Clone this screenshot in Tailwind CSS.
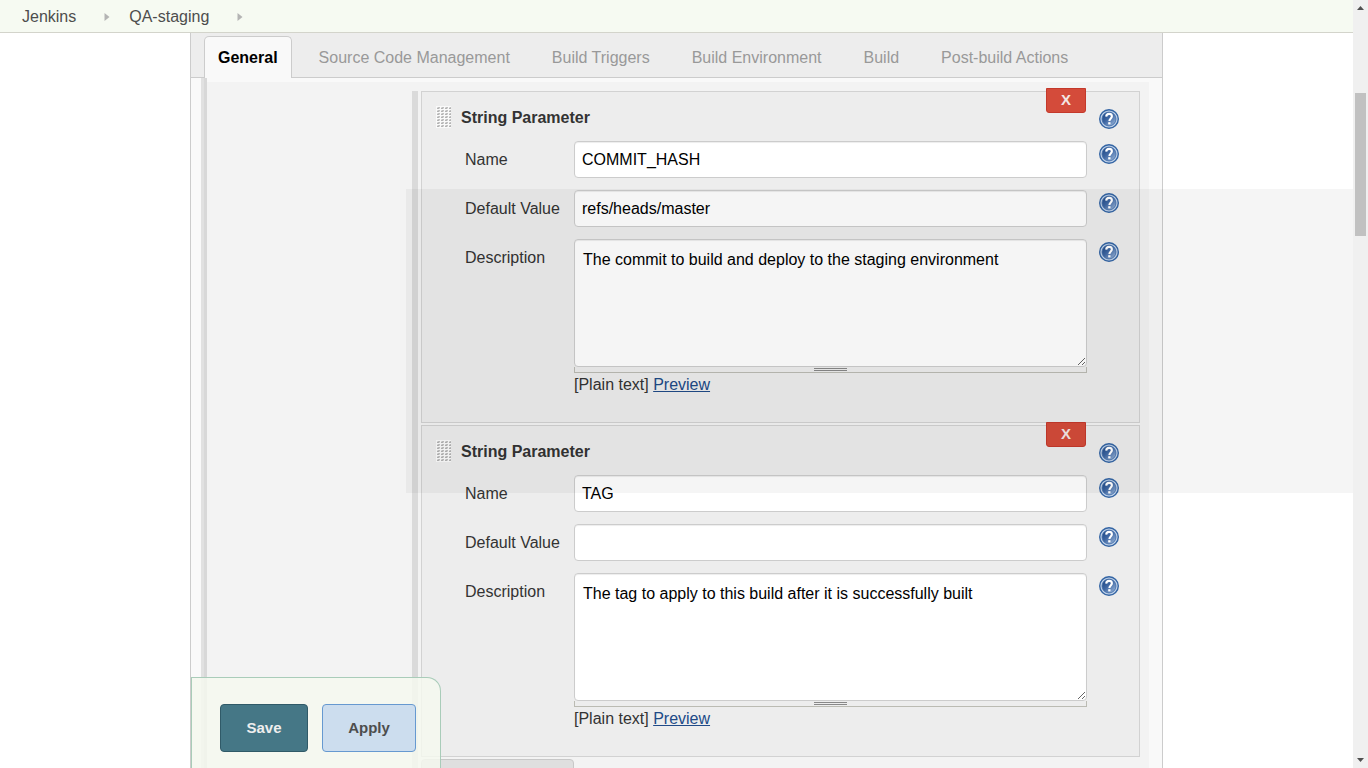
<!DOCTYPE html>
<html lang="en">
<head>
<meta charset="utf-8">
<title>QA-staging Config [Jenkins]</title>
<script src="https://cdn.jsdelivr.net/npm/@tailwindcss/browser@4"></script>
</head>
<body class="relative flex h-screen overflow-hidden bg-white font-['Liberation_Sans',Arial,sans-serif] text-base text-[#333]">
<svg class="absolute size-0" aria-hidden="true">
  <defs>
    <linearGradient id="ball" x1="0" y1="0" x2="1" y2="1">
      <stop offset="0.1" stop-color="#204a87"/>
      <stop offset="0.45" stop-color="#3f67a3"/>
      <stop offset="1" stop-color="#a4bfe0"/>
    </linearGradient>
    <pattern id="grip" x="1" y="1" width="4" height="3" patternUnits="userSpaceOnUse">
      <path d="M0 0h3v2h-3z" fill="#dcdcdc"/>
      <path d="M1 0h2v1h-2z" fill="#c0c0c0"/>
      <path d="M0 1h2v1h-2z" fill="#b4b4b4"/>
    </pattern>
    <symbol id="help" viewBox="0 0 20 20">
      <circle cx="10" cy="10" r="9.3" fill="#c3d4ea" stroke="#3465a4" stroke-width="1.4"/>
      <circle cx="10" cy="10" r="7" fill="url(#ball)" stroke="#3d69a6" stroke-width="0.8"/>
      <path d="M7.2 7.6C7.3 5.7 8.5 4.9 10.1 4.9c1.7 0 2.8 1 2.8 2.4 0 2.1-2.500 2.200-2.500 4.700" fill="none" stroke="#fff" stroke-width="2.1"/>
      <path d="M9.2 13.200h2.300v2.200h-2.300z" fill="#fff"/>
    </symbol>
    <symbol id="handle" viewBox="0 0 15 22">
      <path fill="#fafafa" d="M0 0h15v22H0z"/>
      <path fill="url(#grip)" d="M0 1h15v20H0z"/>
    </symbol>
  </defs>
</svg>

<div class="flex min-w-0 flex-1 flex-col">
  <nav aria-label="Breadcrumb" class="flex h-[33px] shrink-0 items-center border-b border-[#d3d4cb] bg-[#f6faf2] pl-[22px] pt-px">
    <a href="#" class="text-[#4d4d4d]">Jenkins</a>
    <svg class="ml-7 h-2 w-[6px]" viewBox="0 0 6 8" aria-hidden="true"><path d="M0.500 0L5.500 4L0.500 8z" fill="#b4b4b4"/></svg>
    <a href="#" class="ml-[19px] text-[#4d4d4d]">QA-staging</a>
    <svg class="ml-7 h-2 w-[6px]" viewBox="0 0 6 8" aria-hidden="true"><path d="M0.500 0L5.500 4L0.500 8z" fill="#b4b4b4"/></svg>
  </nav>

  <main class="relative mx-auto flex min-h-0 w-full max-w-[973px] flex-1 flex-col border-x border-[#ccc] bg-[#f9f9f9]">
    <div role="tablist" class="flex h-[45px] shrink-0 items-end gap-[14px] border-b border-[#ccc] bg-[#ededed] pl-[13px] text-[#999]">
      <button role="tab" aria-selected="true" class="-mb-px -mr-px h-[42px] rounded-t-[5px] border border-b-0 border-[#ccc] bg-[#f9f9f9] px-[13px] font-bold text-black">General</button>
      <button role="tab" class="h-10 px-[14px] pt-[2px]">Source Code Management</button>
      <button role="tab" class="h-10 px-[14px] pt-[2px]">Build Triggers</button>
      <button role="tab" class="h-10 px-[14px] pt-[2px]">Build Environment</button>
      <button role="tab" class="h-10 px-[14px] pt-[2px]">Build</button>
      <button role="tab" class="h-10 px-[14px] pt-[2px]">Post-build Actions</button>
    </div>

    <div class="ml-[10px] mr-[13px] flex min-h-0 flex-1 overflow-hidden">
      <div class="w-[6px] shrink-0 border-l-3 border-[#e1e1e1] bg-[#d8d8d8]"></div>
      <div class="mt-1 flex min-w-0 flex-1 bg-[#f3f3f3] pl-[205px] pr-[9px] pt-[9px]">
        <div class="mr-[3px] w-[6px] shrink-0 bg-[#dadada]"></div>
        <form class="flex min-w-0 flex-1 flex-col gap-[2px]">

          <section class="relative shrink-0 border border-[#d2d2d2] bg-[#ededed] pb-[26px] pl-[14px] pr-5">
            <button type="button" class="absolute -top-1 right-[53px] h-[25px] w-10 rounded-b-[3px] border border-[#c4392b] bg-[#d44b3a] text-[15px] font-bold text-[#f3e6e4]">X</button>
            <div class="flex h-[49px] items-start">
              <svg class="mt-[14px] h-[22px] w-[15px]" aria-hidden="true"><use href="#handle"/></svg>
              <h2 class="ml-[10px] flex-1 font-bold leading-[52px]">String Parameter</h2>
              <a href="#" aria-label="Help for String Parameter" class="mt-[17px]"><svg class="size-5"><use href="#help"/></svg></a>
            </div>
            <div class="mb-3 ml-[29px] flex items-start">
              <label for="name1" class="w-[109px] leading-[37px]">Name</label>
              <input id="name1" type="text" value="COMMIT_HASH" class="h-[37px] min-w-0 flex-1 rounded border border-[#ccc] bg-white px-[7px] text-black shadow-[inset_0_1px_1px_rgba(0,0,0,0.075)]">
              <a href="#" aria-label="Help for Name" class="ml-3 mt-[3px]"><svg class="size-5"><use href="#help"/></svg></a>
            </div>
            <div class="mb-3 ml-[29px] flex items-start">
              <label for="default1" class="w-[109px] leading-[37px]">Default Value</label>
              <input id="default1" type="text" value="refs/heads/master" class="h-[37px] min-w-0 flex-1 rounded border border-[#ccc] bg-white px-[7px] text-black shadow-[inset_0_1px_1px_rgba(0,0,0,0.075)]">
              <a href="#" aria-label="Help for Default Value" class="ml-3 mt-[3px]"><svg class="size-5"><use href="#help"/></svg></a>
            </div>
            <div class="ml-[29px] flex items-start">
              <label for="desc1" class="w-[109px] leading-[37px]">Description</label>
              <div class="min-w-0 flex-1">
                <textarea id="desc1" class="block h-32 w-full resize rounded border border-[#ccc] bg-white px-2 py-[10px] leading-5 text-black shadow-[inset_0_1px_1px_rgba(0,0,0,0.075)]">The commit to build and deploy to the staging environment</textarea>
                <div class="flex h-[6px] justify-center border-x border-b border-[#bbbbb3] pt-px"><div class="h-[3px] w-[33px] border-y border-[#888]"></div></div>
                <p class="pt-px leading-[22px]">[Plain text] <a href="#" class="text-[#204a87] underline">Preview</a></p>
              </div>
              <a href="#" aria-label="Help for Description" class="ml-3 mt-[3px]"><svg class="size-5"><use href="#help"/></svg></a>
            </div>
          </section>

          <section class="relative shrink-0 border border-[#d2d2d2] bg-[#ededed] pb-[26px] pl-[14px] pr-5">
            <button type="button" class="absolute -top-1 right-[53px] h-[25px] w-10 rounded-b-[3px] border border-[#c4392b] bg-[#d44b3a] text-[15px] font-bold text-[#f3e6e4]">X</button>
            <div class="flex h-[49px] items-start">
              <svg class="mt-[14px] h-[22px] w-[15px]" aria-hidden="true"><use href="#handle"/></svg>
              <h2 class="ml-[10px] flex-1 font-bold leading-[52px]">String Parameter</h2>
              <a href="#" aria-label="Help for String Parameter" class="mt-[17px]"><svg class="size-5"><use href="#help"/></svg></a>
            </div>
            <div class="mb-3 ml-[29px] flex items-start">
              <label for="name2" class="w-[109px] leading-[37px]">Name</label>
              <input id="name2" type="text" value="TAG" class="h-[37px] min-w-0 flex-1 rounded border border-[#ccc] bg-white px-[7px] text-black shadow-[inset_0_1px_1px_rgba(0,0,0,0.075)]">
              <a href="#" aria-label="Help for Name" class="ml-3 mt-[3px]"><svg class="size-5"><use href="#help"/></svg></a>
            </div>
            <div class="mb-3 ml-[29px] flex items-start">
              <label for="default2" class="w-[109px] leading-[37px]">Default Value</label>
              <input id="default2" type="text" value="" class="h-[37px] min-w-0 flex-1 rounded border border-[#ccc] bg-white px-[7px] text-black shadow-[inset_0_1px_1px_rgba(0,0,0,0.075)]">
              <a href="#" aria-label="Help for Default Value" class="ml-3 mt-[3px]"><svg class="size-5"><use href="#help"/></svg></a>
            </div>
            <div class="ml-[29px] flex items-start">
              <label for="desc2" class="w-[109px] leading-[37px]">Description</label>
              <div class="min-w-0 flex-1">
                <textarea id="desc2" class="block h-32 w-full resize rounded border border-[#ccc] bg-white px-2 py-[10px] leading-5 text-black shadow-[inset_0_1px_1px_rgba(0,0,0,0.075)]">The tag to apply to this build after it is successfully built</textarea>
                <div class="flex h-[6px] justify-center border-x border-b border-[#bbbbb3] pt-px"><div class="h-[3px] w-[33px] border-y border-[#888]"></div></div>
                <p class="pt-px leading-[22px]">[Plain text] <a href="#" class="text-[#204a87] underline">Preview</a></p>
              </div>
              <a href="#" aria-label="Help for Description" class="ml-3 mt-[3px]"><svg class="size-5"><use href="#help"/></svg></a>
            </div>
          </section>

          <button type="button" aria-label="Add parameter" class="h-8 w-[153px] shrink-0 rounded border border-[#c8c8c8] bg-[#dfdfdf]"></button>
        </form>
      </div>
    </div>

    <div class="absolute bottom-0 left-0 flex h-[91px] w-[250px] gap-[14px] rounded-tr-[14px] border border-b-0 border-[#a9ccb9] bg-[#f4f8ee]/85 pl-7 pt-[26px] text-[15px] font-bold">
      <button type="submit" class="h-12 w-[88px] rounded border border-[#305a68] bg-[#457786] text-[#eee]">Save</button>
      <button type="button" class="h-12 w-[94px] rounded border border-[#6699d0] bg-[#ccddee] text-[#4d4d4d]">Apply</button>
    </div>
  </main>
</div>

<div class="pointer-events-none absolute left-[406px] right-[15px] top-[189px] h-[304px] bg-black/4"></div>

<div class="flex w-[15px] shrink-0 flex-col items-center justify-between bg-[#f0f0f0]" aria-hidden="true">
  <svg class="mt-[6px] h-1 w-[7px]" viewBox="0 0 7 4"><path d="M0 4L3.500 0L7 4z" fill="#505050"/></svg>
  <div class="mb-auto mt-[83px] h-[143px] w-[11px] bg-[#c1c1c1]"></div>
  <svg class="mb-[6px] h-1 w-[7px]" viewBox="0 0 7 4"><path d="M0 0L3.500 4L7 0z" fill="#505050"/></svg>
</div>
</body>
</html>
